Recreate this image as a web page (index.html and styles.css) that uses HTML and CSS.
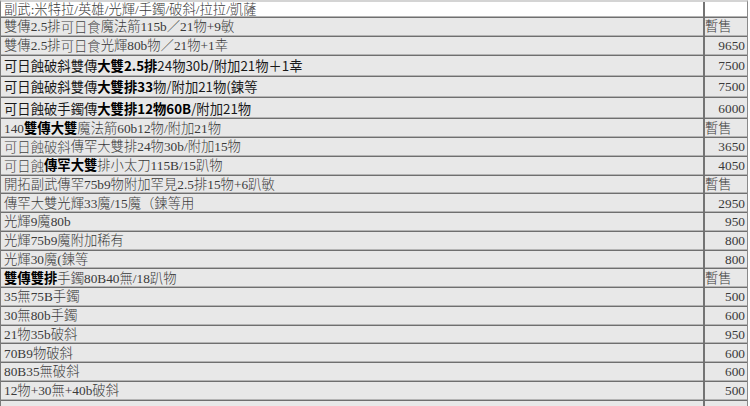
FILE: index.html
```html
<!DOCTYPE html>
<html lang="zh-Hant">
<head>
<meta charset="utf-8">
<title>價目表</title>
<link rel="stylesheet" href="styles.css">
</head>
<body>
<div class="sheet">
  <div class="row first"><div class="name">副武:米特拉/英雄/光輝/手鐲/破斜/拉拉/凱薩</div><div class="price"></div></div>
  <div class="row"><div class="name">雙傳2.5排<span class="sans">可日食</span>魔法箭115b／21物+9敏</div><div class="price left">暫售</div></div>
  <div class="row"><div class="name">雙傳2.5排<span class="sans">可日食</span>光輝80b物／21物+1幸</div><div class="price">9650</div></div>
  <div class="row tall"><div class="name sansrow">可日蝕破斜雙傳<b>大雙2.5排</b>24物30b/附加21物＋1幸</div><div class="price">7500</div></div>
  <div class="row tall"><div class="name sansrow">可日蝕破斜雙傳<b>大雙排33</b>物/附加21物(鍊等</div><div class="price">7500</div></div>
  <div class="row tall"><div class="name sansrow">可日蝕破手鐲傳<b>大雙排12物60B</b>/附加21物</div><div class="price">6000</div></div>
  <div class="row"><div class="name">140<b>雙傳大雙</b>魔法箭60b12物/附加21物</div><div class="price left">暫售</div></div>
  <div class="row"><div class="name"><span class="sans">可日蝕破斜</span>傳罕大雙排24物30b/附加15物</div><div class="price">3650</div></div>
  <div class="row"><div class="name"><span class="sans">可日蝕</span><b>傳罕大雙</b>排小太刀115B/15趴物</div><div class="price">4050</div></div>
  <div class="row"><div class="name">開拓副武傳罕75b9物附加罕見2.5排15物+6趴敏</div><div class="price left">暫售</div></div>
  <div class="row"><div class="name">傳罕大雙光輝33魔/15魔（鍊等用</div><div class="price">2950</div></div>
  <div class="row"><div class="name">光輝9魔80b</div><div class="price">950</div></div>
  <div class="row"><div class="name">光輝75b9魔附加稀有</div><div class="price">800</div></div>
  <div class="row"><div class="name">光輝30魔(鍊等</div><div class="price">800</div></div>
  <div class="row"><div class="name"><b>雙傳雙排</b>手鐲80B40無/18趴物</div><div class="price left">暫售</div></div>
  <div class="row"><div class="name">35無75B手鐲</div><div class="price">500</div></div>
  <div class="row"><div class="name">30無80b手鐲</div><div class="price">600</div></div>
  <div class="row"><div class="name">21物35b破斜</div><div class="price">950</div></div>
  <div class="row"><div class="name">70B9物破斜</div><div class="price">600</div></div>
  <div class="row"><div class="name">80B35無破斜</div><div class="price">600</div></div>
  <div class="row"><div class="name">12物+30無+40b破斜</div><div class="price">500</div></div>
  <div class="row"><div class="name"></div><div class="price"></div></div>
</div>
</body>
</html>
```

FILE: styles.css
```css
html, body {
  margin: 0;
  padding: 0;
  background: #ffffff;
  overflow: hidden;
}

.sheet {
  display: flex;
  flex-direction: column;
  width: 748px;
  box-sizing: border-box;
  border-top: 2px solid #d4d4d4;
  border-left: 1px solid #7a7a7a;
  border-right: 1px solid #8a8a8a;
  font-family: "Liberation Serif", "Noto Sans CJK TC", serif;
  font-size: 13.33px;
  color: #3a3a3a;
}

.row {
  display: grid;
  grid-template-columns: 704px 41px;
  height: 18.75px;
  flex: none;
  box-sizing: border-box;
  background: #e8e8e8;
  border-bottom: 1px solid #6f6f6f;
  box-shadow: inset 0 -1px 0 #b4b4b4;
}

.row.first {
  height: 16px;
  background: #ffffff;
}

.row.tall {
  height: 21.33px;
}

.name {
  display: flex;
  align-items: center;
  padding-left: 3px;
  white-space: nowrap;
  overflow: hidden;
  border-right: 2px solid #747474;
  line-height: 1;
  font-weight: 300;
}

.name b {
  font-weight: 700;
  color: #000000;
}

.sans {
  font-family: "Noto Sans CJK TC", sans-serif;
  font-weight: 300;
  color: #444444;
}

.sansrow {
  font-family: "Noto Sans CJK TC", sans-serif;
  font-weight: 400;
  color: #1a1a1a;
}

.price {
  display: flex;
  align-items: center;
  justify-content: flex-end;
  padding-right: 1px;
  white-space: nowrap;
  line-height: 1;
  font-weight: 300;
}

.price.left {
  justify-content: flex-start;
  padding-left: 0;
}
```
